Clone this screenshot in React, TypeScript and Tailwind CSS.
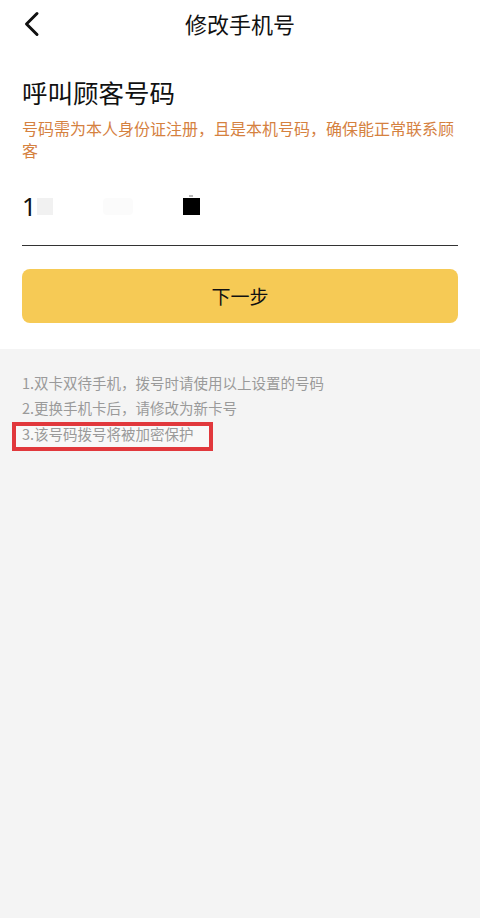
import React from "react";

export default function App() {
  const font = { fontFamily: '"Noto Sans CJK SC", "Noto Sans", sans-serif' };
  return (
    <div className="w-[480px] h-[918px] bg-[#f4f4f4] flex flex-col" style={font}>
      <div className="bg-white flex flex-col">
        <div className="relative h-[46px] flex items-center justify-center">
          <svg className="absolute left-[22px] top-[11px]" width="20" height="26" viewBox="0 0 20 26" fill="none">
            <polyline points="15,2.5 4.5,13 15,23.5" stroke="#111" strokeWidth="3" strokeLinecap="round" strokeLinejoin="round" />
          </svg>
          <span className="text-[22px] leading-[28px] text-[#111]">修改手机号</span>
        </div>
        <div className="px-[22px] pb-[26px] flex flex-col">
          <div className="mt-[30px] text-[25.5px] leading-[32px] text-[#111]">呼叫顾客号码</div>
          <div className="mt-[9px] text-[16px] leading-[22px] text-[#d5813f]">
            号码需为本人身份证注册，且是本机号码，确保能正常联系顾客
          </div>
          <div className="mt-[29px] pb-[23px] border-b border-[#333]">
            <div className="h-[32px] flex items-center">
              <span className="text-[25px] leading-[32px] text-[#111]" style={{ fontFamily: '"Noto Sans", sans-serif' }}>1</span>
              <div className="ml-[1px] w-[16px] h-[17px] bg-[#f1f1f1]" />
              <div className="ml-[50px] w-[30px] h-[17px] bg-[#fbfbfb] rounded-[4px]" />
              <div className="relative ml-[50px] w-[17px] h-[17px] bg-black">
                <div className="absolute left-[6px] top-[-3px] w-[4px] h-[2px] bg-[#bbb]" />
              </div>
            </div>
          </div>
          <button className="mt-[23px] h-[54px] w-full rounded-[8px] bg-[#f6ca55] flex items-center justify-center text-[19px] text-[#111]">
            下一步
          </button>
        </div>
      </div>
      <div className="px-[22px] pt-[22px] flex flex-col text-[14.5px] text-[#9a9a9a]">
        <div className="leading-[24.5px]">1.双卡双待手机，拨号时请使用以上设置的号码</div>
        <div className="leading-[24.5px]">2.更换手机卡后，请修改为新卡号</div>
        <div className="mt-[2px] ml-[-10px] w-[201px] h-[29px] border-4 border-[#e1383c] bg-[#f8f8f8] pl-[6px] leading-[16px]">
          3.该号码拨号将被加密保护
        </div>
      </div>
    </div>
  );
}
